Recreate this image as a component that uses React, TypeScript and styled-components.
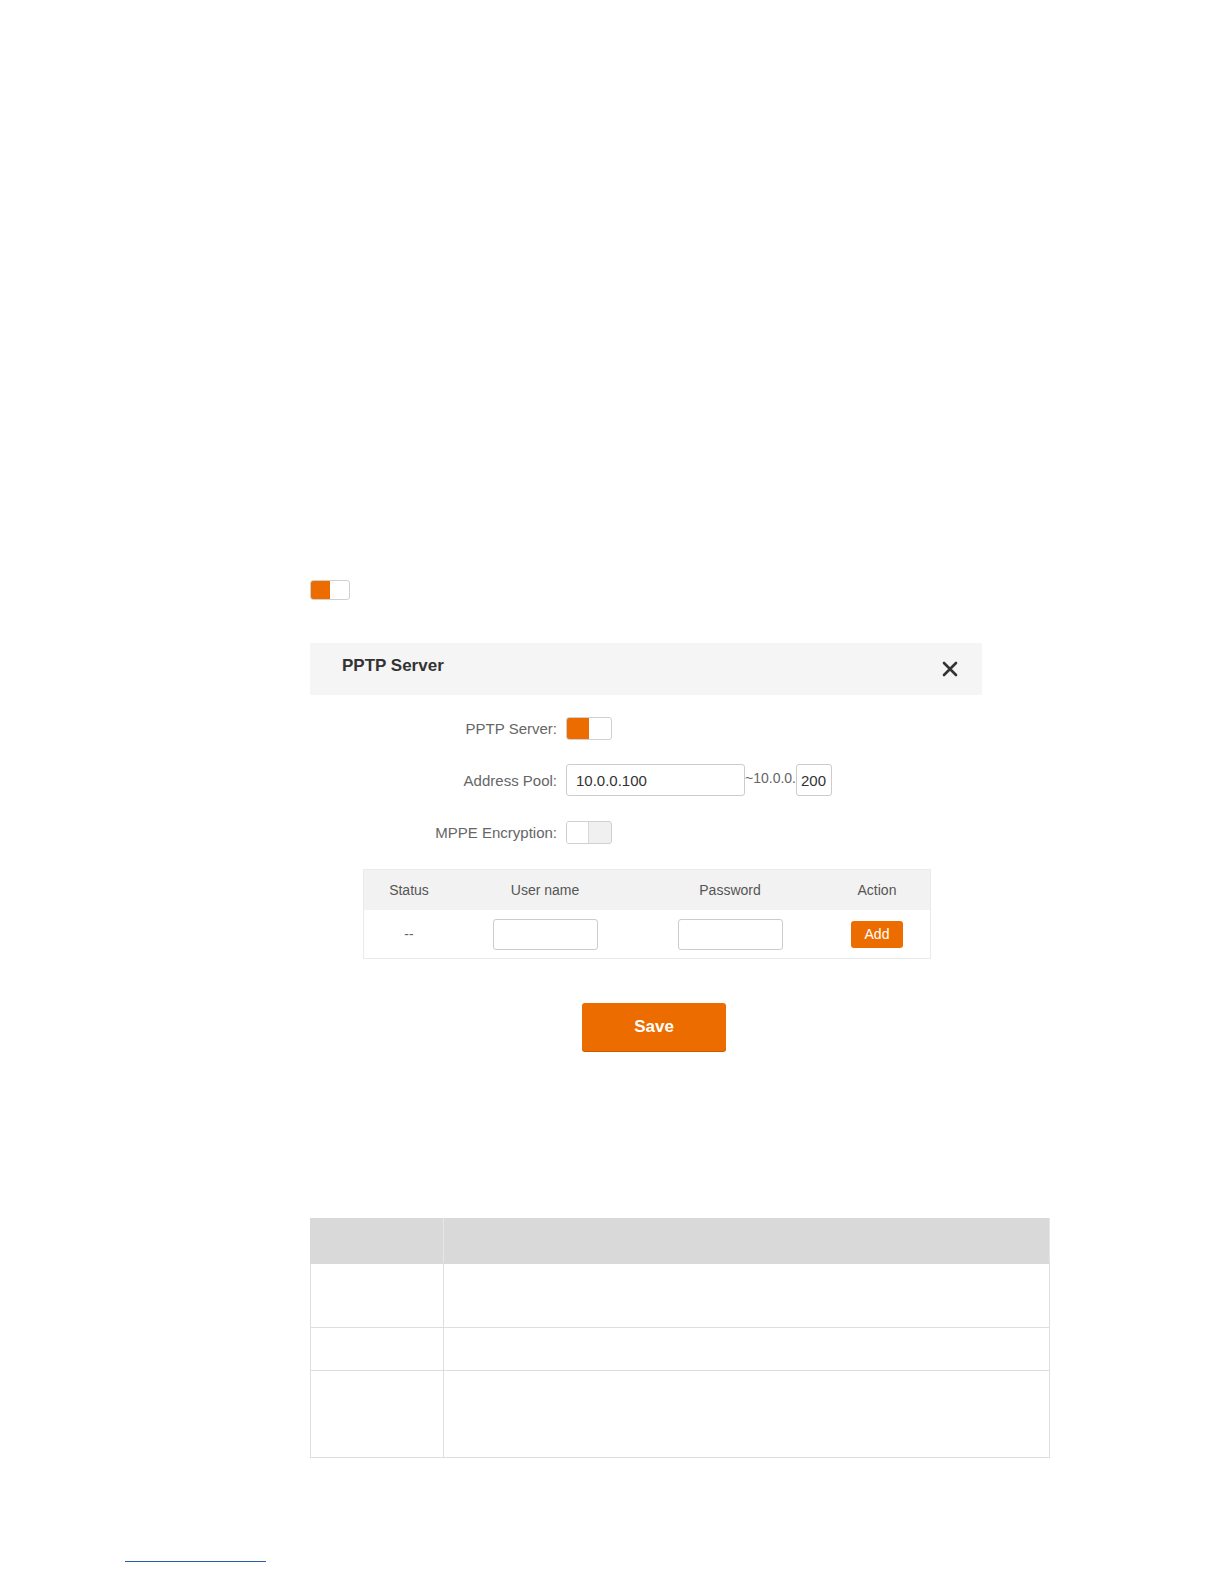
import React from "react";
import styled, { createGlobalStyle } from "styled-components";

// colours taken from the router web ui
const ORANGE = "#ed6c00";

const GlobalStyle = createGlobalStyle`
  html, body {
    margin: 0;
    padding: 0;
    background: #fff;
  }
  body {
    font-family: "Liberation Sans", Arial, sans-serif;
    color: #555;
  }
`;

const Page = styled.div`
  width: 1224px;
  height: 1584px;
  padding-top: 580px;
  box-sizing: border-box;
  overflow: hidden;
`;

const Content = styled.div`
  margin-left: 310px;
  display: flex;
  flex-direction: column;
`;

const Switch = styled.div<{ $on: boolean; $w: number; $h: number }>`
  width: ${(p) => p.$w}px;
  height: ${(p) => p.$h}px;
  box-sizing: border-box;
  border: 1px solid #d0d0d0;
  border-radius: 3px;
  display: flex;
  overflow: hidden;
  background: ${(p) => (p.$on ? "#fff" : "#f0f0f0")};

  &::before {
    content: "";
    width: 50%;
    height: 100%;
    background: ${(p) => (p.$on ? ORANGE : "#fff")};
    border-right: ${(p) => (p.$on ? "none" : "1px solid #d8d8d8")};
    box-sizing: border-box;
  }
`;

const Panel = styled.div`
  margin-top: 43px;
  width: 672px;
`;

const PanelHeader = styled.div`
  height: 52px;
  background: #f5f5f5;
  display: flex;
  align-items: center;
  justify-content: space-between;
  padding: 0 23px 0 32px;
  box-sizing: border-box;
`;

const Title = styled.h2`
  margin: 0 0 6px;
  font-size: 17px;
  font-weight: bold;
  color: #333;
`;

const Close = styled.button`
  border: none;
  background: none;
  padding: 0;
  width: 18px;
  height: 18px;
  display: flex;
  cursor: pointer;
`;

const Form = styled.div`
  display: flex;
  flex-direction: column;
  gap: 20px;
  padding-top: 17px;
`;

const Row = styled.div`
  display: grid;
  grid-template-columns: 247px auto;
  column-gap: 9px;
  align-items: center;
  height: 32px;
`;

const Label = styled.label`
  text-align: right;
  font-size: 15px;
  color: #666;
`;

const Controls = styled.div`
  display: flex;
  align-items: center;
`;

const TextInput = styled.input<{ $w: number }>`
  width: ${(p) => p.$w}px;
  height: 32px;
  box-sizing: border-box;
  border: 1px solid #ccc;
  border-radius: 3px;
  padding: 0 5px 0 9px;
  font-family: "Liberation Sans", Arial, sans-serif;
  font-size: 15px;
  color: #333;
  outline: none;
`;

const SmallInput = styled(TextInput)`
  padding: 0 4px;
`;

const Sep = styled.span`
  font-size: 14px;
  color: #666;
  padding-bottom: 4px;
`;

const Table = styled.table`
  margin: 21px 0 0 53px;
  width: 566px;
  border-collapse: collapse;
  border: 1px solid #eaeaea;
  table-layout: fixed;
`;

const Th = styled.th<{ $w: number }>`
  width: ${(p) => p.$w}px;
  height: 40px;
  background: #f2f2f2;
  font-weight: normal;
  font-size: 14px;
  color: #555;
  text-align: center;
  padding: 0;
`;

const Td = styled.td`
  height: 48px;
  text-align: center;
  font-size: 14px;
  color: #666;
  padding: 0;
`;

const CellInput = styled.input`
  width: 105px;
  height: 31px;
  box-sizing: border-box;
  border: 1px solid #ccc;
  border-radius: 3px;
  outline: none;
  vertical-align: middle;
`;

const AddButton = styled.button`
  width: 52px;
  height: 27px;
  border: none;
  border-radius: 3px;
  background: ${ORANGE};
  color: #fff;
  font-family: "Liberation Sans", Arial, sans-serif;
  font-size: 14px;
  padding: 0;
  vertical-align: middle;
`;

const SaveButton = styled.button`
  margin: 44px 0 0 272px;
  width: 144px;
  height: 48px;
  border: none;
  border-radius: 3px;
  background: ${ORANGE};
  box-shadow: 0 1px 0 #c95a00;
  color: #fff;
  font-family: "Liberation Sans", Arial, sans-serif;
  font-weight: bold;
  font-size: 17px;
`;

const InfoTable = styled.table`
  margin-top: 167px;
  width: 740px;
  border-collapse: collapse;
  table-layout: fixed;
`;

const InfoHead = styled.th<{ $w?: number }>`
  ${(p) => (p.$w ? `width: ${p.$w}px;` : "")}
  height: 44px;
  background: #d9d9d9;
  border: 1px solid #d9d9d9;
  border-right-color: #e6e6e6;
  padding: 0;
`;

const InfoCell = styled.td<{ $h: number }>`
  height: ${(p) => p.$h}px;
  border: 1px solid #dedede;
  padding: 0;
`;

const FooterRule = styled.div`
  margin: 103px 0 0 125px;
  width: 141px;
  height: 1px;
  background: #2b5aa8;
`;

function CloseIcon() {
  return (
    <svg width="18" height="18" viewBox="0 0 18 18">
      <path d="M3 3 L15 15 M15 3 L3 15" stroke="#333" strokeWidth="2.6" strokeLinecap="round" />
    </svg>
  );
}

export default function App() {
  return (
    <>
      <GlobalStyle />
      <Page>
        <Content>
          <Switch $on $w={40} $h={20} />

          <Panel>
            <PanelHeader>
              <Title>PPTP Server</Title>
              <Close aria-label="close">
                <CloseIcon />
              </Close>
            </PanelHeader>

            <Form>
              <Row>
                <Label>PPTP Server:</Label>
                <Controls>
                  <Switch $on $w={46} $h={23} />
                </Controls>
              </Row>
              <Row>
                <Label>Address Pool:</Label>
                <Controls>
                  <TextInput $w={179} defaultValue="10.0.0.100" />
                  <Sep>~10.0.0.</Sep>
                  <SmallInput $w={36} defaultValue="200" />
                </Controls>
              </Row>
              <Row>
                <Label>MPPE Encryption:</Label>
                <Controls>
                  <Switch $on={false} $w={46} $h={23} />
                </Controls>
              </Row>
            </Form>

            <Table>
              <thead>
                <tr>
                  <Th $w={90}>Status</Th>
                  <Th $w={182}>User name</Th>
                  <Th $w={188}>Password</Th>
                  <Th $w={106}>Action</Th>
                </tr>
              </thead>
              <tbody>
                <tr>
                  <Td>--</Td>
                  <Td>
                    <CellInput />
                  </Td>
                  <Td>
                    <CellInput type="password" />
                  </Td>
                  <Td>
                    <AddButton>Add</AddButton>
                  </Td>
                </tr>
              </tbody>
            </Table>

            <SaveButton>Save</SaveButton>
          </Panel>

          <InfoTable>
            <thead>
              <tr>
                <InfoHead $w={132} />
                <InfoHead />
              </tr>
            </thead>
            <tbody>
              <tr>
                <InfoCell $h={63} />
                <InfoCell $h={63} />
              </tr>
              <tr>
                <InfoCell $h={42} />
                <InfoCell $h={42} />
              </tr>
              <tr>
                <InfoCell $h={86} />
                <InfoCell $h={86} />
              </tr>
            </tbody>
          </InfoTable>
        </Content>
        <FooterRule />
      </Page>
    </>
  );
}
